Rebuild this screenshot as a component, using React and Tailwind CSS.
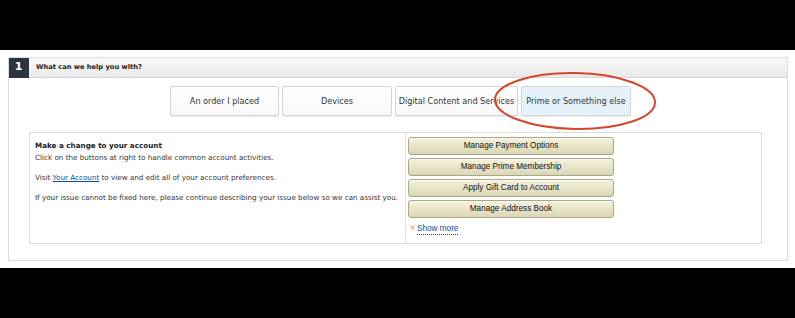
import React from 'react'

// ── Shared class strings ──────────────────────────────────────────────────────

const TAB_CLS =
  'h-[30px] flex items-center justify-center border border-[#d5d5d5] rounded-[2px] text-[8.1px] text-[#333] shadow-[0_1px_1px_rgba(0,0,0,0.08)]'
const BTN_CLS =
  'h-[18px] w-[206px] flex items-center justify-center rounded-[3px] border border-[#aaa68c] bg-gradient-to-b from-[#f6f3dc] to-[#dad6b4] text-[8.2px] text-[#111] shadow-[inset_0_1px_0_rgba(255,255,255,0.6)]'

const TABS = [
  { label: 'An order I placed', w: 'w-[109px]', active: false },
  { label: 'Devices', w: 'w-[110px]', active: false },
  { label: 'Digital Content and Services', w: 'w-[123px]', active: false },
  { label: 'Prime or Something else', w: 'w-[110px]', active: true },
]

const ACTIONS = [
  'Manage Payment Options',
  'Manage Prime Membership',
  'Apply Gift Card to Account',
  'Manage Address Book',
]

function Tab({ label, w, active }) {
  const bg = active
    ? 'bg-[#e6f2fb] border-[#a9c7de]'
    : 'bg-gradient-to-b from-white to-[#f7f7f7]'
  return <div className={`${TAB_CLS} ${w} ${bg}`}>{label}</div>
}

function Chevron() {
  return (
    <svg width="5" height="5" viewBox="0 0 5 5" className="mb-[4px]">
      <path d="M0.5 0.5 L2.5 2.2 L4.5 0.5 M0.5 2.5 L2.5 4.2 L4.5 2.5" fill="none" stroke="#e8902a" strokeWidth="1" />
    </svg>
  )
}

function Highlight() {
  return (
    <svg className="absolute left-[492px] top-[70px] pointer-events-none" width="170" height="64" viewBox="0 0 170 64">
      <ellipse cx="83" cy="31" rx="80" ry="28" fill="none" stroke="#d4462e" strokeWidth="2" transform="rotate(1 83 31)" />
    </svg>
  )
}

// ── Main component ────────────────────────────────────────────────────────────

export default function App() {
  return (
    <div className="relative w-[795px] h-[318px] bg-black pt-[50px] font-['DejaVu_Sans',Verdana,sans-serif]">
      <div className="h-[218px] bg-white px-[8px] pt-[7px]">
        <div className="h-[204px] w-[779px]">
          <header className="flex h-[21px]">
            <div className="w-[21px] h-[21px] bg-[#2b3440] flex items-center justify-center text-white text-[11px] font-bold">1</div>
            <div className="flex-1 flex items-center pl-[7px] bg-gradient-to-b from-[#fafafa] to-[#e9e9e9] border-b border-[#d6d6d6] text-[6.7px] font-bold text-[#222]">
              What can we help you with?
            </div>
          </header>

          <div className="flex gap-[3px] pl-[162px] mt-[8px]">
            {TABS.map((t) => <Tab key={t.label} {...t} />)}
          </div>

          <div className="ml-[21px] mt-[16px] w-[733px] h-[112px] border border-[#dcdcdc] flex">
            <div className="w-[375px] pl-[5px] pt-[7px] text-[7.2px] text-[#333] leading-[12px]">
              <p className="font-bold text-[#222]">Make a change to your account</p>
              <p>Click on the buttons at right to handle common account activities.</p>
              <p className="mt-[8px]">
                Visit <a className="text-[#0e4ba1] underline">Your Account</a> to view and edit all of your account preferences.
              </p>
              <p className="mt-[8px]">If your issue cannot be fixed here, please continue describing your issue below so we can assist you.</p>
            </div>
            <div className="border-l border-[#e3e3e3] pl-[2px] pt-[4px] flex flex-col gap-[3px] font-['Liberation_Sans',Arial,sans-serif]">
              {ACTIONS.map((a) => <button key={a} className={BTN_CLS}>{a}</button>)}
              <div className="flex items-center gap-[2px] mt-[3px] pl-[2px] text-[8.2px]">
                <Chevron />
                <a className="text-[#0e4ba1] border-b border-dotted border-[#0e4ba1] leading-[10px]">Show more</a>
              </div>
            </div>
          </div>
        </div>
      </div>
      <div className="absolute left-[8px] top-[57px] w-[780px] h-[204px] border border-[#dcdcdc] pointer-events-none" />
      <Highlight />
    </div>
  )
}
